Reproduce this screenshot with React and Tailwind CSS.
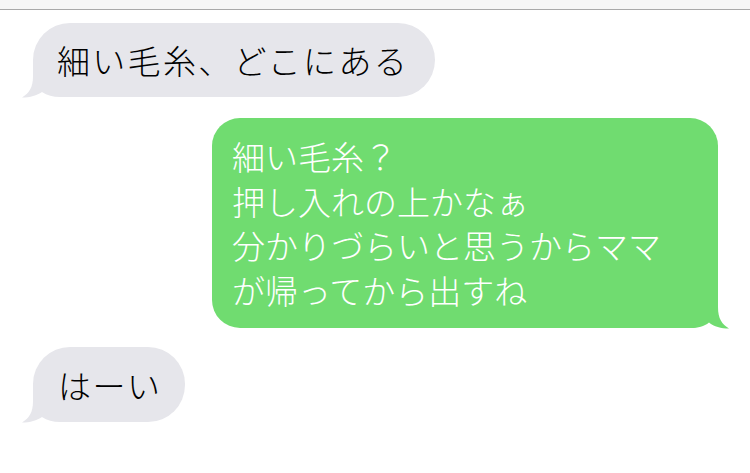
export default function App() {
  const font = { fontFamily: '"Noto Sans CJK JP", "Noto Sans", sans-serif' };
  const GrayTail = () => (
    <svg className="absolute left-[-13px] bottom-[-1px]" width="50" height="38" viewBox="0 0 50 38">
      <path d="M13 0 L13 16 C13 28 9 33 2 37.5 C10 37.5 17 35.5 22 32 C27 35.5 33 37 40 37 L50 37 L50 0 Z" fill="#e6e6eb" />
    </svg>
  );
  return (
    <div className="w-[750px] h-[473px] bg-white overflow-hidden relative" style={font}>
      <div className="h-[10px] bg-[#f6f6f6] border-b border-[#a9a9a9]" />
      <div className="flex flex-col pt-[13px]">
        <div className="pl-[33px]">
          <div className="relative w-[402px] h-[74px] rounded-[37px] bg-[#e6e6eb] pl-[24px] flex items-center">
            <GrayTail />
            <span className="relative text-[33px] leading-[44px] font-light tracking-[2.3px] text-black whitespace-nowrap">細い毛糸、どこにある</span>
          </div>
        </div>
        <div className="flex justify-end pr-[32px] mt-[21px]">
          <div className="relative w-[506px] h-[210px] rounded-[28px] bg-[#70dc70] pl-[20px] pt-[16px]">
            <svg className="absolute right-[-13px] bottom-[-1px]" width="50" height="38" viewBox="0 0 50 38">
              <path d="M37 0 L37 16 C37 28 41 33 48 37.5 C40 37.5 33 35.5 28 31.5 C23 35.5 17 37 10 37 L0 37 L0 0 Z" fill="#70dc70" />
            </svg>
            <div className="relative text-[33px] leading-[44.5px] font-light text-white whitespace-nowrap">
              <div>細い毛糸？</div>
              <div>押し入れの上かなぁ</div>
              <div>分かりづらいと思うからママ</div>
              <div>が帰ってから出すね</div>
            </div>
          </div>
        </div>
        <div className="pl-[33px] mt-[19px]">
          <div className="relative w-[152px] h-[75px] rounded-[37px] bg-[#e6e6eb] pl-[25px] flex items-center">
            <GrayTail />
            <span className="relative text-[33px] leading-[44px] font-light tracking-[1.5px] text-black whitespace-nowrap">はーい</span>
          </div>
        </div>
      </div>
    </div>
  );
}
